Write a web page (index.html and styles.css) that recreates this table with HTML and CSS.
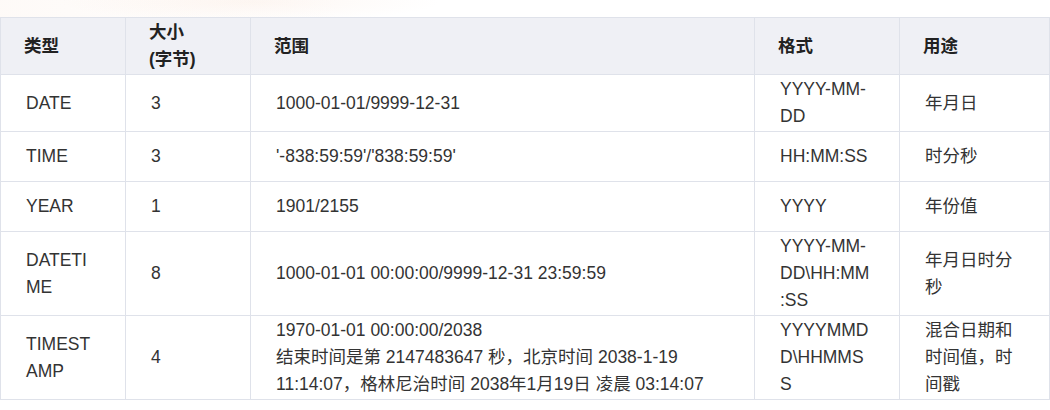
FILE: index.html
```html
<!DOCTYPE html>
<html lang="zh-CN">
<head>
<meta charset="utf-8">
<title>MySQL 日期时间类型</title>
<link rel="stylesheet" href="styles.css">
</head>
<body>
<div class="page">
  <table class="types">
    <colgroup>
      <col class="c-type">
      <col class="c-size">
      <col class="c-range">
      <col class="c-fmt">
      <col class="c-use">
    </colgroup>
    <thead>
      <tr>
        <th>类型</th>
        <th>大小<br>(字节)</th>
        <th>范围</th>
        <th>格式</th>
        <th>用途</th>
      </tr>
    </thead>
    <tbody>
      <tr>
        <td>DATE</td>
        <td>3</td>
        <td>1000-01-01/9999-12-31</td>
        <td>YYYY-MM-DD</td>
        <td>年月日</td>
      </tr>
      <tr>
        <td>TIME</td>
        <td>3</td>
        <td>'-838:59:59'/'838:59:59'</td>
        <td>HH:MM:SS</td>
        <td>时分秒</td>
      </tr>
      <tr>
        <td>YEAR</td>
        <td>1</td>
        <td>1901/2155</td>
        <td>YYYY</td>
        <td>年份值</td>
      </tr>
      <tr>
        <td>DATETIME</td>
        <td>8</td>
        <td>1000-01-01 00:00:00/9999-12-31 23:59:59</td>
        <td>YYYY-MM-DD\HH:MM:SS</td>
        <td>年月日时分秒</td>
      </tr>
      <tr>
        <td>TIMESTAMP</td>
        <td>4</td>
        <td>1970-01-01 00:00:00/2038<br>结束时间是第 2147483647 秒，北京时间 2038-1-19 11:14:07，格林尼治时间 2038年1月19日 凌晨 03:14:07</td>
        <td>YYYYMMDD\HHMMSS</td>
        <td>混合日期和时间值，时间戳</td>
      </tr>
    </tbody>
  </table>
</div>
</body>
</html>
```

FILE: styles.css
```css
html, body {
  margin: 0;
  padding: 0;
  background: #ffffff;
}

body {
  font-family: "Liberation Sans", Arial, "Noto Sans CJK SC", sans-serif;
  color: #333333;
  width: 1050px;
  height: 410px;
  overflow: hidden;
}

.page {
  padding-top: 17px;
  background:
    radial-gradient(ellipse 190px 20px at 250px 2px, rgba(245, 205, 180, 0.16), rgba(255, 255, 255, 0) 100%),
    linear-gradient(to right, rgba(250, 235, 225, 0.25), rgba(255, 255, 255, 0) 340px);
  background-size: 100% 17px;
  background-repeat: no-repeat;
}

.types {
  width: 1049px;
  border-collapse: collapse;
  table-layout: fixed;
  font-size: 17.5px;
  line-height: 27px;
  background: #ffffff;
}

.c-type { width: 125px; }
.c-size { width: 125px; }
.c-range { width: 504px; }
.c-fmt { width: 145px; }
.c-use { width: 150px; }

.types th,
.types td {
  border: 1px solid #dfe2ea;
  text-align: left;
  vertical-align: middle;
  overflow-wrap: anywhere;
}

.types th {
  background: #eff0f5;
  font-weight: bold;
  color: #222222;
  padding: 1px 28px 1px 23px;
}

.types td {
  padding: 1px 28px 1px 25px;
  height: 47px;
}
```
